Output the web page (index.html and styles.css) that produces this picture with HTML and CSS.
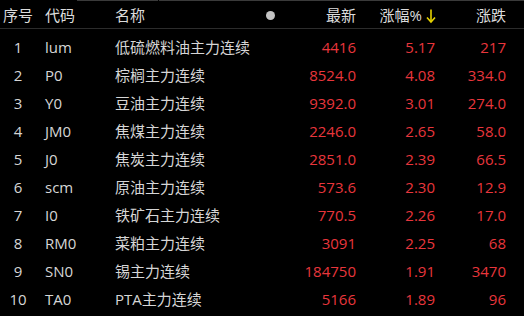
FILE: index.html
```html
<!DOCTYPE html>
<html lang="zh">
<head>
<meta charset="utf-8">
<link rel="stylesheet" href="styles.css">
</head>
<body>
<div class="board">
  <div class="top-rule"><span class="seg seg-a"></span><span class="seg seg-b"></span></div>
  <div class="row head">
    <div class="c-num">序号</div>
    <div class="c-code">代码</div>
    <div class="c-name"><span>名称</span><span class="dot"></span></div>
    <div class="c-r">最新</div>
    <div class="c-r sort">涨幅%<svg class="arrow" width="10" height="16" viewBox="0 0 10 16"><path d="M5 1.5V13.5" stroke="#e6d200" stroke-width="1.6" fill="none"/><path d="M1 9.5L5 14L9 9.5" stroke="#e6d200" stroke-width="1.6" fill="none"/></svg></div>
    <div class="c-r">涨跌</div>
  </div>
  <div class="list">
    <div class="row"><div class="c-num">1</div><div class="c-code">lum</div><div class="c-name">低硫燃料油主力连续</div><div class="c-r up">4416</div><div class="c-r up">5.17</div><div class="c-r up">217</div></div>
    <div class="row"><div class="c-num">2</div><div class="c-code">P0</div><div class="c-name">棕榈主力连续</div><div class="c-r up">8524.0</div><div class="c-r up">4.08</div><div class="c-r up">334.0</div></div>
    <div class="row"><div class="c-num">3</div><div class="c-code">Y0</div><div class="c-name">豆油主力连续</div><div class="c-r up">9392.0</div><div class="c-r up">3.01</div><div class="c-r up">274.0</div></div>
    <div class="row"><div class="c-num">4</div><div class="c-code">JM0</div><div class="c-name">焦煤主力连续</div><div class="c-r up">2246.0</div><div class="c-r up">2.65</div><div class="c-r up">58.0</div></div>
    <div class="row"><div class="c-num">5</div><div class="c-code">J0</div><div class="c-name">焦炭主力连续</div><div class="c-r up">2851.0</div><div class="c-r up">2.39</div><div class="c-r up">66.5</div></div>
    <div class="row"><div class="c-num">6</div><div class="c-code">scm</div><div class="c-name">原油主力连续</div><div class="c-r up">573.6</div><div class="c-r up">2.30</div><div class="c-r up">12.9</div></div>
    <div class="row"><div class="c-num">7</div><div class="c-code">I0</div><div class="c-name">铁矿石主力连续</div><div class="c-r up">770.5</div><div class="c-r up">2.26</div><div class="c-r up">17.0</div></div>
    <div class="row"><div class="c-num">8</div><div class="c-code">RM0</div><div class="c-name">菜粕主力连续</div><div class="c-r up">3091</div><div class="c-r up">2.25</div><div class="c-r up">68</div></div>
    <div class="row"><div class="c-num">9</div><div class="c-code">SN0</div><div class="c-name">锡主力连续</div><div class="c-r up">184750</div><div class="c-r up">1.91</div><div class="c-r up">3470</div></div>
    <div class="row"><div class="c-num">10</div><div class="c-code">TA0</div><div class="c-name">PTA主力连续</div><div class="c-r up">5166</div><div class="c-r up">1.89</div><div class="c-r up">96</div></div>
  </div>
</div>
</body>
</html>
```

FILE: styles.css
```css
html, body {
  margin: 0;
  padding: 0;
  background: #000;
}
.board {
  width: 524px;
  height: 316px;
  overflow: hidden;
  background: #000;
  color: #d6d6d6;
  font-family: "Open Sans", "Noto Sans CJK SC", sans-serif;
  font-size: 15px;
}
.top-rule {
  display: flex;
  height: 1px;
  padding-left: 77px;
  gap: 1px;
}
.seg { height: 1px; background: #3a3a3a; }
.seg-a { width: 81px; }
.seg-b { flex: 1; }
.row {
  display: grid;
  grid-template-columns: 36px 79px 161px 80px 79px 71px;
  align-items: center;
  height: 28px;
  line-height: 28px;
  white-space: nowrap;
}
.head {
  height: 25px;
  line-height: 25px;
  padding-top: 2px;
  border-bottom: 1px solid #2c2c2c;
  color: #dcdcdc;
}
.list { padding-top: 4px; }
.c-num { text-align: center; }
.c-code { padding-left: 9px; }
.c-name {
  display: flex;
  justify-content: space-between;
  align-items: center;
}
.dot {
  width: 9px;
  height: 9px;
  border-radius: 50%;
  background: #c4c4c4;
  margin-right: 1px;
}
.c-r { text-align: right; }
.sort {
  display: flex;
  justify-content: flex-end;
  align-items: center;
  gap: 4px;
  margin-right: -1px;
}
.arrow { display: block; margin-top: 1px; }
.up { color: #e8363c; }
```
